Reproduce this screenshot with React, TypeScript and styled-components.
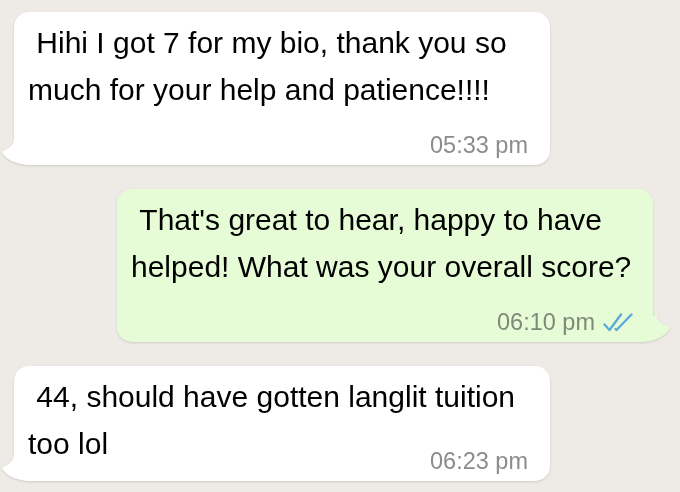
import React from "react";
import styled, { createGlobalStyle } from "styled-components";

const GlobalStyle = createGlobalStyle`
  html, body {
    margin: 0;
    padding: 0;
    background: #eeebe6;
  }
  body {
    font-family: "Liberation Sans", Arial, Helvetica, sans-serif;
  }
`;

const Chat = styled.div`
  width: 680px;
  height: 492px;
  box-sizing: border-box;
  padding: 12px 27px 0 14px;
  display: flex;
  flex-direction: column;
  gap: 24px;
  overflow: hidden;
`;

const Bubble = styled.div<{ $out?: boolean }>`
  position: relative;
  width: 536px;
  box-sizing: border-box;
  align-self: ${p => (p.$out ? "flex-end" : "flex-start")};
  background: ${p => (p.$out ? "#e6fcd6" : "#ffffff")};
  border-radius: 15px;
  padding: 7px 8px 8px 14px;
  filter: drop-shadow(0 1px 1px rgba(0, 0, 0, 0.13));
`;

const Tail = styled.svg<{ $out?: boolean }>`
  position: absolute;
  bottom: 0;
  width: 30px;
  height: 26px;
  ${p => (p.$out ? "right: -17px;" : "left: -12px;")}
`;

const Text = styled.p`
  margin: 0;
  font-size: 30px;
  line-height: 47px;
  color: #000;
  white-space: pre-wrap;
`;

const Meta = styled.div<{ $overlap?: boolean; $out?: boolean }>`
  display: flex;
  justify-content: flex-end;
  align-items: center;
  gap: 8px;
  margin-top: ${p => (p.$overlap ? "-18px" : "20px")};
  padding-right: ${p => (p.$out ? "12px" : "14px")};
  height: 24px;
`;

const Time = styled.span<{ $out?: boolean }>`
  font-size: 23.5px;
  line-height: 24px;
  color: ${p => (p.$out ? "#7e8a79" : "#8c8c8c")};
`;

const Ticks = () => (
  <svg width="30" height="19" viewBox="0 0 30 19">
    <g fill="none" stroke="#5ba8dc" strokeWidth="2.3" strokeLinecap="round" strokeLinejoin="round">
      <path d="M1.5 11.5 L6.5 17 L18 1.5" />
      <path d="M12.5 16 L13.5 17 L28.5 1.5" />
    </g>
  </svg>
);

const BubbleTail = ({ out }: { out?: boolean }) => (
  <Tail $out={out} viewBox="0 0 30 26">
    {out ? (
      <path d="M17 0 C17 6 23 9 30 11 C27 19 16 26 0 26 L0 0 Z" fill="#e6fcd6" />
    ) : (
      <path d="M12 0 C12 6 6 10 0 13 C3 20 14 26 30 26 L30 0 Z" fill="#ffffff" />
    )}
  </Tail>
);

interface MessageProps {
  text: string;
  time: string;
  out?: boolean;
  inline?: boolean;
}

const Message = ({ text, time, out, inline }: MessageProps) => (
  <Bubble $out={out}>
    <BubbleTail out={out} />
    <Text>{text}</Text>
    <Meta $overlap={inline} $out={out}>
      <Time $out={out}>{time}</Time>
      {out && <Ticks />}
    </Meta>
  </Bubble>
);

export default function App() {
  return (
    <>
      <GlobalStyle />
      <Chat>
        <Message
          text=" Hihi I got 7 for my bio, thank you so much for your help and patience!!!!"
          time="05:33 pm"
        />
        <Message
          out
          text=" That's great to hear, happy to have helped! What was your overall score?"
          time="06:10 pm"
        />
        <Message
          inline
          text=" 44, should have gotten langlit tuition too lol"
          time="06:23 pm"
        />
      </Chat>
    </>
  );
}
